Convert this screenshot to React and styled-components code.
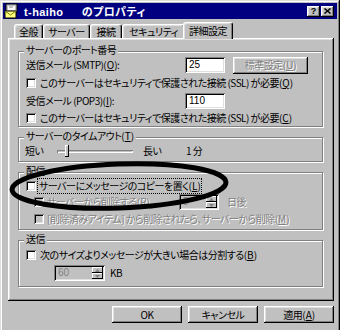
import React from "react";
import styled, { createGlobalStyle } from "styled-components";

const GlobalStyle = createGlobalStyle`
  html, body { margin:0; padding:0; background:#c0c0c0; overflow:hidden; }
  body {
    font-family: "Noto Sans CJK JP", "Liberation Sans", sans-serif;
    font-size: 10px;
    font-feature-settings: "palt";
    letter-spacing: -0.5px;
    color: #000;
  }
  * { box-sizing: border-box; }
`;

const raised = `
  box-shadow: inset -1px -1px #000, inset 1px 1px #fff, inset -2px -2px #808080, inset 2px 2px #dfdfdf;
`;
const sunken = `
  box-shadow: inset 1px 1px #808080, inset -1px -1px #fff, inset 2px 2px #000, inset -2px -2px #dfdfdf;
`;

const Screen = styled.div`
  position: relative;
  width: 340px;
  height: 330px;
  overflow: hidden;
`;

const Window = styled.div`
  width: 340px;
  height: 334px;
  padding: 3px;
  background: #c0c0c0;
  box-shadow: inset -1px -1px #000, inset 1px 1px #dfdfdf, inset -2px -2px #808080, inset 2px 2px #fff;
  display: flex;
  flex-direction: column;
`;

const TitleBar = styled.div`
  height: 16px;
  background: #000080;
  color: #fff;
  display: flex;
  align-items: center;
  padding: 0 3px 0 1px;
`;

const TitleText = styled.span`
  margin-left: 4px;
  font-family: "Liberation Sans", "Noto Sans CJK JP", sans-serif;
  font-weight: bold;
  font-size: 11px;
  white-space: pre;
  letter-spacing: 0.4px;
`;

const TitleButtons = styled.div`
  margin-left: auto;
  display: flex;
  gap: 1px;
`;

const TitleButton = styled.div`
  width: 13px;
  height: 11px;
  background: #c0c0c0;
  ${raised}
  display: flex;
  align-items: center;
  justify-content: center;
  color: #000;
  font: bold 9px "Liberation Sans", sans-serif;
  letter-spacing: 0;
  padding-bottom: 1px;
`;

const Body = styled.div`
  padding: 3px 3px 0 5px;
`;

const TabStrip = styled.div`
  display: flex;
  height: 16px;
  padding-left: 6px;
  position: relative;
  z-index: 1;
`;

const Tab = styled.div`
  width: ${(p) => p.w}px;
  height: ${(p) => (p.active ? 17 : 14)}px;
  margin: ${(p) => (p.active ? "0 -2px 0 -2px" : "2px 0 0 0")};
  background: #c0c0c0;
  border-top: 1px solid #fff;
  border-left: 1px solid #fff;
  border-right: 1px solid #000;
  border-radius: 3px 3px 0 0;
  box-shadow: inset -1px 0 #808080, inset 1px 1px #dfdfdf;
  display: flex;
  align-items: center;
  justify-content: center;
  padding-bottom: 1px;
  white-space: nowrap;
`;

const Panel = styled.div`
  width: 326px;
  height: 263px;
  background: #c0c0c0;
  box-shadow: inset -1px -1px #000, inset 1px 1px #fff, inset -2px -2px #808080, inset 2px 2px #dfdfdf;
  padding: 13px 11px 0 10px;
  display: flex;
  flex-direction: column;
  gap: 10px;
`;

const Group = styled.div`
  position: relative;
  height: ${(p) => p.h}px;
  border: 1px solid #808080;
  box-shadow: inset 1px 1px #fff, 1px 1px #fff;
  padding: ${(p) => p.pt}px 0 0 0;
  display: flex;
  flex-direction: column;
`;

const Legend = styled.span`
  position: absolute;
  top: -8px;
  left: 5px;
  padding: 0 2px;
  line-height: 11px;
  background: #c0c0c0;
  white-space: nowrap;
`;

const Row = styled.div`
  display: flex;
  align-items: center;
  height: ${(p) => p.h || 18}px;
  padding-left: ${(p) => p.indent || 0}px;
  white-space: nowrap;
  line-height: 12px;
`;

const Text = styled.span`
  width: ${(p) => (p.w ? `${p.w}px` : "auto")};
  flex: none;
  color: ${(p) => (p.disabled ? "#808080" : "#000")};
  text-shadow: ${(p) => (p.disabled ? "1px 1px #fff" : "none")};
  margin-left: ${(p) => p.ml || 0}px;
`;

const Key = styled.u`
  letter-spacing: 0;
  margin-left: 0.5px;
`;

const FocusText = styled.span`
  border: 1px dotted #000;
  padding: 1px 1px 1px 1px;
  line-height: 12px;
`;

const Check = styled.span`
  width: 10px;
  height: 10px;
  flex: none;
  margin-right: ${(p) => p.mr || 4}px;
  background: ${(p) => (p.disabled ? "#c0c0c0" : "#fff")};
  ${sunken}
`;

const Input = styled.div`
  width: ${(p) => p.w}px;
  height: 16px;
  flex: none;
  background: ${(p) => (p.disabled ? "#c0c0c0" : "#fff")};
  color: ${(p) => (p.disabled ? "#808080" : "#000")};
  ${sunken}
  display: flex;
  align-items: center;
  padding: 0 2px 0 4px;
  font-family: "Liberation Sans", sans-serif;
  font-size: 10px;
  letter-spacing: 0;
`;

const SpinArrows = styled.div`
  margin-left: auto;
  display: flex;
  flex-direction: column;
  width: 11px;
  height: 12px;
`;

const SpinHalf = styled.div`
  flex: 1;
  background: #c0c0c0;
  box-shadow: inset -1px -1px #000, inset 1px 1px #fff;
  display: flex;
  align-items: center;
  justify-content: center;
`;

const PushButton = styled.div`
  width: ${(p) => p.w || 70}px;
  height: ${(p) => p.h || 17}px;
  flex: none;
  background: #c0c0c0;
  ${raised}
  display: flex;
  align-items: center;
  justify-content: center;
  color: ${(p) => (p.disabled ? "#808080" : "#000")};
  text-shadow: ${(p) => (p.disabled ? "1px 1px #fff" : "none")};
  margin-left: ${(p) => p.ml || 0}px;
`;

const SliderTrack = styled.div`
  position: relative;
  width: 76px;
  height: 3px;
  flex: none;
  box-shadow: inset 1px 1px #808080, inset -1px -1px #fff;
`;

const SliderThumb = styled.div`
  position: absolute;
  left: 8px;
  top: -5px;
  width: 4px;
  height: 12px;
  background: #c0c0c0;
  box-shadow: inset -1px -1px #000, inset 1px 1px #fff;
`;

const ButtonRow = styled.div`
  display: flex;
  justify-content: flex-end;
  gap: 6px;
  margin-top: 5px;
  width: 326px;
`;

const Overlay = styled.svg`
  position: absolute;
  left: 0;
  top: 0;
  pointer-events: none;
`;

const Arrow = ({ up }) => (
  <svg width="5" height="3" viewBox="0 0 5 3">
    <path d={up ? "M2.5 0 L5 3 L0 3 Z" : "M0 0 L5 0 L2.5 3 Z"} fill="#808080" />
  </svg>
);

const Spin = ({ w, value }) => (
  <Input w={w} disabled>
    {value}
    <SpinArrows>
      <SpinHalf><Arrow up /></SpinHalf>
      <SpinHalf><Arrow /></SpinHalf>
    </SpinArrows>
  </Input>
);

const AppIcon = () => (
  <svg width="16" height="16" viewBox="0 0 16 16">
    <path d="M2 1 H13 V9 H2 Z" fill="#c0c0c0" stroke="#000" strokeWidth="1" />
    <path d="M4 3 H11 V7 H4 Z" fill="#fff" />
    <path d="M5 4 H9" stroke="#808080" />
    <path d="M1 8 H12 V15 H1 Z" fill="#ffff80" stroke="#000" strokeWidth="1" />
    <path d="M1 8 L6.5 12 L12 8" fill="none" stroke="#808000" strokeWidth="1" />
  </svg>
);

const App = () => {
  return (
    <Screen>
      <GlobalStyle />
      <Window>
        <TitleBar>
          <AppIcon />
          <TitleText>t-haiho　  のプロパティ</TitleText>
          <TitleButtons>
            <TitleButton>?</TitleButton>
            <TitleButton>
              <svg width="7" height="6" viewBox="0 0 7 6">
                <path d="M0.5 0.5 L6.5 5.5 M6.5 0.5 L0.5 5.5" stroke="#000" strokeWidth="1.5" />
              </svg>
            </TitleButton>
          </TitleButtons>
        </TitleBar>
        <Body>
          <TabStrip>
            <Tab w={29}>全般</Tab>
            <Tab w={47}>サーバー</Tab>
            <Tab w={32}>接続</Tab>
            <Tab w={63}>セキュリティ</Tab>
            <Tab w={50} active>詳細設定</Tab>
          </TabStrip>
          <Panel>
            <Group h={76} pt={4}>
              <Legend>サーバーのポート番号</Legend>
              <Row indent={7}>
                <Text w={159}>送信メール (SMTP)(<Key>O</Key>):</Text>
                <Input w={40}>25</Input>
                <PushButton w={75} h={17} ml={8} disabled>標準設定(<Key>U</Key>)</PushButton>
              </Row>
              <Row indent={7}>
                <Check />
                <Text>このサーバーはセキュリティで保護された接続 (SSL) が必要(<Key>Q</Key>)</Text>
              </Row>
              <Row indent={7}>
                <Text w={159}>受信メール (POP3)(<Key>I</Key>):</Text>
                <Input w={40}>110</Input>
              </Row>
              <Row indent={7} h={16}>
                <Check />
                <Text>このサーバーはセキュリティで保護された接続 (SSL) が必要(<Key>C</Key>)</Text>
              </Row>
            </Group>

            <Group h={25} pt={5}>
              <Legend>サーバーのタイムアウト(<Key>T</Key>)</Legend>
              <Row indent={6} h={16}>
                <Text w={32}>短い</Text>
                <SliderTrack>
                  <SliderThumb />
                </SliderTrack>
                <Text w={43} ml={10}>長い</Text>
                <Text>1 分</Text>
              </Row>
            </Group>

            <Group h={58} pt={5}>
              <Legend>配信</Legend>
              <Row indent={7} h={16}>
                <Check mr={1} />
                <FocusText>サーバーにメッセージのコピーを置く(<Key>L</Key>)</FocusText>
              </Row>
              <Row indent={15} h={16}>
                <Check disabled mr={3} />
                <Text w={132} disabled>サーバーから削除する(<Key>R</Key>)</Text>
                <Spin w={40} value="5" />
                <Text ml={8} disabled>日後</Text>
              </Row>
              <Row indent={15} h={17}>
                <Check disabled mr={3} />
                <Text disabled>[削除済みアイテム] から削除されたら、サーバーから削除(<Key>M</Key>)</Text>
              </Row>
            </Group>

            <Group h={47} pt={6}>
              <Legend>送信</Legend>
              <Row indent={7} h={16}>
                <Check />
                <Text>次のサイズよりメッセージが大きい場合は分割する(<Key>B</Key>)</Text>
              </Row>
              <Row indent={35} h={20}>
                <Spin w={51} value="60" />
                <Text ml={5}>KB</Text>
              </Row>
            </Group>
          </Panel>
          <ButtonRow>
            <PushButton>OK</PushButton>
            <PushButton>キャンセル</PushButton>
            <PushButton>適用(<Key>A</Key>)</PushButton>
          </ButtonRow>
        </Body>
      </Window>
      <Overlay width="340" height="330" viewBox="0 0 340 330">
        <ellipse cx="119" cy="186" rx="107" ry="22" fill="none" stroke="#000" strokeWidth="5" transform="rotate(-2 119 186)" />
      </Overlay>
    </Screen>
  );
};

export default App;
